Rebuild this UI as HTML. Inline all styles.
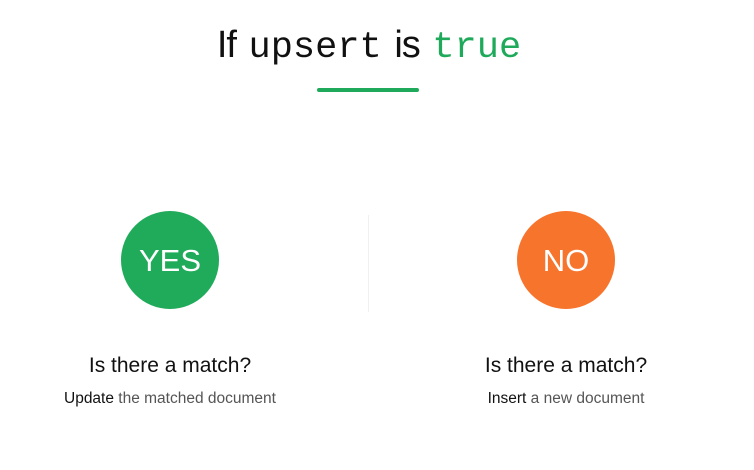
<!DOCTYPE html>
<html><head><style>
body{margin:0;width:754px;height:470px;background:#fff;font-family:"Liberation Sans",sans-serif;position:relative;overflow:hidden}
.t{position:absolute;top:24px;left:-8px;width:754px;text-align:center;font-size:38px;color:#111;white-space:nowrap;word-spacing:2px}
.t .s{font-weight:300;letter-spacing:-1px}
.m{font-family:"Liberation Mono",monospace;font-size:37px;word-spacing:0}
.bar{position:absolute;left:317px;top:88px;width:102px;height:4px;border-radius:2px;background:#1faa5b}
.c{position:absolute;width:98px;height:98px;border-radius:50%;color:#fff;font-size:31px;line-height:100px;text-align:center}
.div{position:absolute;left:368px;top:215px;width:1px;height:97px;background:#f0f0f0}
.q{position:absolute;width:300px;text-align:center;font-size:21px;color:#111;top:354px}
.a{position:absolute;width:300px;text-align:center;font-size:15.5px;color:#555;top:390px}
.a b{color:#111;font-weight:normal}
</style></head><body>
<div class="t"><span class="s">If</span> <span class="m">upsert</span> <span class="s">is</span> <span class="m" style="color:#1faa5b">true</span></div>
<div class="bar"></div>
<div class="c" style="left:121px;top:211px;background:#20ab5b">YES</div>
<div class="div"></div>
<div class="c" style="left:517px;top:211px;background:#f7742d">NO</div>
<div class="q" style="left:20px">Is there a match?</div>
<div class="a" style="left:20px"><b>Update</b> the matched document</div>
<div class="q" style="left:416px">Is there a match?</div>
<div class="a" style="left:416px"><b>Insert</b> a new document</div>
</body></html>
